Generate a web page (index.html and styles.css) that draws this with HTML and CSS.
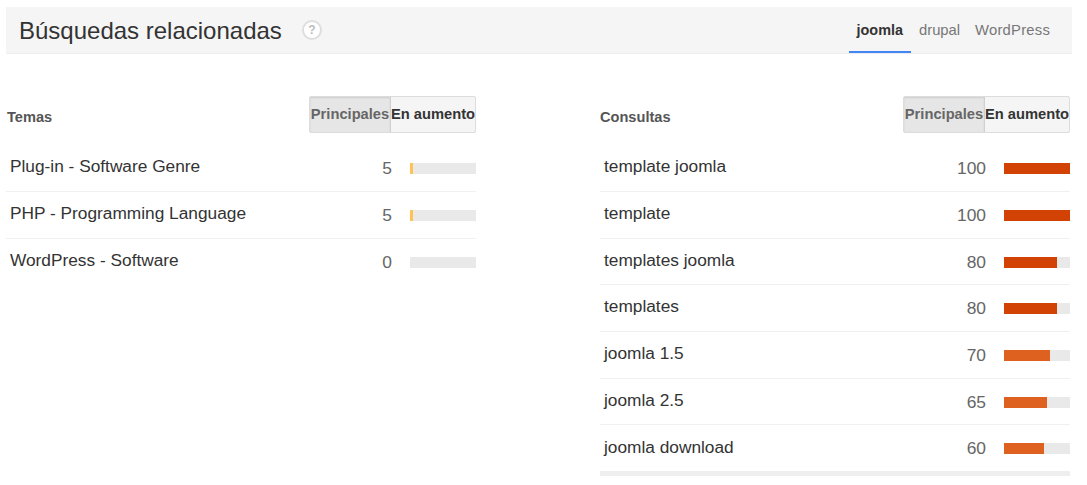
FILE: index.html
```html
<!DOCTYPE html>
<html lang="es">
<head>
<meta charset="utf-8">
<title>Búsquedas relacionadas</title>
<link rel="stylesheet" href="styles.css">
</head>
<body>
<header class="head">
  <h1 class="title">Búsquedas relacionadas</h1>
  <span class="help">?</span>
  <nav class="tabs">
    <span class="tab active">joomla</span>
    <span class="tab">drupal</span>
    <span class="tab wp">WordPress</span>
  </nav>
</header>
<main class="cols">
  <section class="col">
    <div class="col-head">
      <h2 class="col-title">Temas</h2>
      <div class="toggle"><span class="tg on">Principales</span><span class="tg">En aumento</span></div>
    </div>
    <div class="row"><span class="name">Plug-in - Software Genre</span><span class="val">5</span><span class="bar"><span class="fill low" style="width:5%"></span></span></div>
    <div class="row"><span class="name">PHP - Programming Language</span><span class="val">5</span><span class="bar"><span class="fill low" style="width:5%"></span></span></div>
    <div class="row last"><span class="name">WordPress - Software</span><span class="val">0</span><span class="bar"></span></div>
  </section>
  <section class="col">
    <div class="col-head">
      <h2 class="col-title narrow">Consultas</h2>
      <div class="toggle"><span class="tg on">Principales</span><span class="tg">En aumento</span></div>
    </div>
    <div class="row"><span class="name">template joomla</span><span class="val">100</span><span class="bar"><span class="fill hot" style="width:100%"></span></span></div>
    <div class="row"><span class="name">template</span><span class="val">100</span><span class="bar"><span class="fill hot" style="width:100%"></span></span></div>
    <div class="row"><span class="name">templates joomla</span><span class="val">80</span><span class="bar"><span class="fill hot" style="width:80%"></span></span></div>
    <div class="row"><span class="name">templates</span><span class="val">80</span><span class="bar"><span class="fill hot" style="width:80%"></span></span></div>
    <div class="row"><span class="name">joomla 1.5</span><span class="val">70</span><span class="bar"><span class="fill warm" style="width:70%"></span></span></div>
    <div class="row"><span class="name">joomla 2.5</span><span class="val">65</span><span class="bar"><span class="fill warm" style="width:65%"></span></span></div>
    <div class="row end"><span class="name">joomla download</span><span class="val">60</span><span class="bar"><span class="fill warm" style="width:60%"></span></span></div>
  </section>
</main>
</body>
</html>
```
FILE: styles.css
```css
* { box-sizing: border-box; }
html, body { margin: 0; padding: 0; background: #fff; }
body {
  font-family: "Liberation Sans", Arial, sans-serif;
  color: #333;
  padding: 7px 15px 0 6px;
  overflow: hidden;
  height: 485px;
}
.head {
  display: flex;
  align-items: center;
  height: 47px;
  background: #f5f5f5;
  border-bottom: 1px solid #eeeeee;
  padding-left: 13px;
}
.title {
  margin: 2px 0 0;
  font-size: 24px;
  font-weight: 400;
  color: #333;
}
.help {
  width: 20px;
  height: 20px;
  margin-left: 20px;
  border: 2px solid #dedede;
  border-radius: 50%;
  background: #fff;
  color: #bdbdbd;
  font-size: 12px;
  font-weight: 700;
  line-height: 16px;
  text-align: center;
}
.tabs {
  display: flex;
  margin-left: auto;
  margin-right: 14px;
  height: 46px;
}
.tab {
  padding: 15px 8px 0;
  font-size: 14.8px;
  color: #777;
}
.tab.wp {
  letter-spacing: .22px;
  margin-left: -1px;
}
.tab.active {
  color: #333;
  font-weight: 700;
  font-size: 14.4px;
  border-bottom: 2px solid #4285f4;
  height: 46px;
}
.cols {
  display: flex;
  justify-content: space-between;
  padding-top: 42px;
  margin-right: 2px;
}
.col { width: 470px; }
.col-head {
  display: flex;
  align-items: center;
  justify-content: space-between;
  height: 37px;
  margin-bottom: 12.4px;
}
.col-title {
  margin: 4px 0 0 1px;
  font-size: 14.6px;
  font-weight: 700;
  color: #555;
}
.col-title.narrow { margin-left: 0; }
.toggle {
  display: flex;
  height: 37px;
  width: 167px;
  border: 1px solid #dcdcdc;
  border-radius: 2px;
  font-size: 14.7px;
  font-weight: 700;
  background: #f5f5f5;
  color: #333;
}
.tg {
  flex: 0 0 auto;
  line-height: 35px;
  width: 84px;
  text-align: center;
  white-space: nowrap;
}
.tg.on {
  width: 81px;
  background: #e6e6e6;
  color: #666;
  border-right: 1px solid #d0d0d0;
  box-shadow: inset 0 1px 2px rgba(0,0,0,.1);
}
.row {
  display: flex;
  align-items: center;
  height: 46.67px;
  border-bottom: 1px solid #f0f0f0;
  padding-left: 4px;
}
.row.last { border-bottom: 0; }
.row.end { border-bottom: 5px solid #eeeeee; height: 50.67px; }
.row.end .name { margin-top: -2px; }
.name {
  flex: 1;
  font-size: 17.3px;
  color: #333;
  margin-top: -3px;
}
.val {
  font-size: 17.4px;
  color: #666;
  margin: 1px 18px 0 0;
}
.bar {
  display: block;
  width: 66px;
  height: 11px;
  margin-top: 1px;
  background: #e9e9e9;
}
.fill { display: block; height: 100%; }
.low { background: #fdc453; }
.hot { background: #d34205; }
.warm { background: #de6120; }
```
